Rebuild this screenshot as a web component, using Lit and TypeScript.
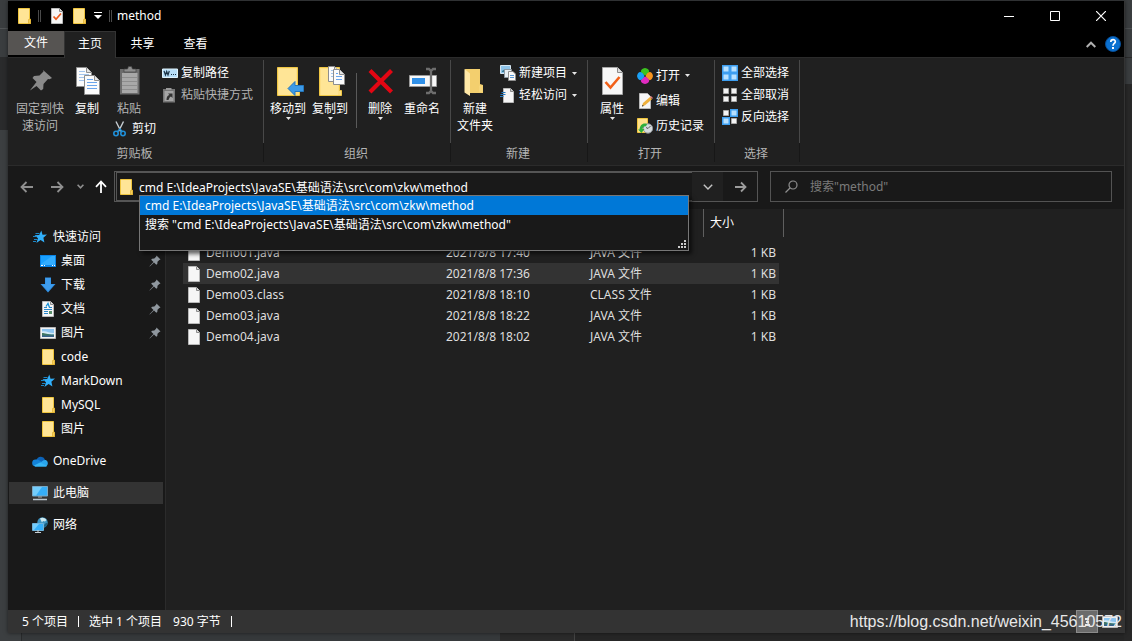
import { LitElement, html, css, svg, nothing, TemplateResult } from "lit";
import { customElement, state } from "lit/decorators.js";
import { classMap } from "lit/directives/class-map.js";

const draw = (w: number, h: number, body: unknown, vw = w, vh = h) =>
  html`<svg width=${w} height=${h} viewBox="0 0 ${vw} ${vh}" aria-hidden="true">${body}</svg>`;

const folder = (w = 16, h = 16) =>
  draw(w, h, svg`<path d="M2.5.5h11v11h1v4h-12z" fill="#ffe08a" stroke="#efc53e"/><path d="M3 1h10v14H3z" fill="#ffe596"/><path d="M12.5 15.5v-4l2-.5v4.5z" fill="#f5cf5b" stroke="#dfae2e" stroke-width=".7"/>`, 16, 16);

const page = (extra: unknown = nothing) =>
  draw(16, 16, svg`<path d="M2.5.5h8l3 3v12h-11z" fill="#f6f6f6" stroke="#b9b9b9"/><path d="M10.5.5v3h3" fill="#ddd" stroke="#8b8b8b"/>${extra}`);

const star = draw(16, 16, svg`<path d="M9.3 1.5l1.2 4.2 4.5-.1-3.6 3.1 1 4.8-3.8-2.4-4.2 3 1.6-4.9L2.500 6.300l4.700-.3z" fill="#31b0fb"/><path d="M3.500 4.500h4M1 7.500h4M2 10.500h3.500M1 12.500h3" stroke="#1b86c8"/>`);

const icons = {
  folder: folder(),
  star,
  desktop: draw(16, 16, svg`<path d="M0 2h16v12H0z" fill="#0a84e6"/><path d="M1 3h14v9H1z" fill="#19a0ff"/><path d="M1 11L12 3h3v9H1z" fill="#33adff"/><path d="M1 12.500h2m1 0h1m7 0h1m1 0h1" stroke="#fff"/>`),
  download: draw(16, 16, svg`<path d="M5 .5h6V7h4.500L8 15.500.5 7H5z" fill="#2f8fe3"/><path d="M5.500 1h5v6.500h3.500L8 14 2 7.500h3.500z" fill="#3f9ded"/>`),
  document: page(svg`<path d="M4 8.500h8M4 6.500h3M9 6.500h3M4 10.500h4M4 12.500h4" stroke="#2b87c9"/><path d="M6 5.500L8 2.500l1.500 4" stroke="#1791d6" stroke-width="1.300" fill="none"/><path d="M9 10h3v3H9z" fill="#5a8f6a"/>`),
  picture: draw(16, 16, svg`<path d="M.5 2.500h15v11H.5z" fill="#f2f2f2" stroke="#b8b8b8"/><path d="M2 4h12v8H2z" fill="#8cc4f0"/><path d="M2 6.500c4-1 8 2 12 1.500v1H2z" fill="#d3e9f5"/><path d="M2 8c3 0 5 1.500 12 1.500V12H2z" fill="#3f7663"/><path d="M2 10.500h12V12H2z" fill="#35608b"/>`),
  cloud: draw(16, 16, svg`<path d="M4.500 7A4.500 4.500 0 0 1 13 6.500L10 10z" fill="#0c63b8"/><path d="M3.500 13.500A3.300 3.300 0 0 1 3.800 6.500c2-.5 3.700.500 8.200 4z" fill="#1382d8"/><path d="M3 13.500L10.500 8c1-.8 2.500-1.500 4-.5 2 1.500 1.700 5-.5 6z" fill="#2aa5ec"/><path d="M2 12.500L8 9.500l7 3.200c-.5.800-1 .8-2 .8H4c-1 0-1.500-.4-2-1z" fill="#36b5f4"/>`),
  computer: draw(16, 16, svg`<path d="M.5 1.500h15v9.500H.5z" fill="#35aef8" stroke="#7aa8c4"/><path d="M1 2h9L4 10.500H1z" fill="#73cdfc"/><path d="M6 11.500h4v1H6zM4 13h8" fill="#aaa"/><path d="M1 14.500h14" stroke="#b9c6cf" stroke-width="1.500"/>`),
  network: draw(16, 16, svg`<circle cx="10.500" cy="5.500" r="5.200" fill="#3e93c0"/><path d="M8 1.500c2-1.300 5-.5 6.500 1.500l-1.500 1.500-2-.5-1 1.500z" fill="#cfe9ef"/><path d="M12 8c1.500-1.500 2.500-2.500 3.500-2 0 2-1 3.500-3 4.500z" fill="#1c5f80"/><path d="M.5 6.500h11v7H.5z" fill="#35aef8" stroke="#6fb3da"/><path d="M1 7h6l-5 6H1z" fill="#73cdfc"/><path d="M5 14h2M3 15.500h6" stroke="#c6cfd5"/>`),
  pin: draw(12, 12, svg`<path d="M7.500.5l4 4-1.200.4L8.500 6.700 8.300 9l-1 .8L5 7.500.8 11.500l-.3-.3L4.500 7 2.200 4.700l.8-1 2.300-.2 1.800-1.800z" fill="#8f979e"/>`),
  file: page(),
  check: page(svg`<path d="M4.500 8.500l2.500 2.700 5-5.700" stroke="#ea5a1c" stroke-width="1.700" fill="none"/>`),
};

const sheet = (x: number, y: number, w: number, h: number, line: string) => svg`
  <path d="M${x} ${y}h${w - 5}l5 5v${h - 5}h${-w}z" fill="#fbfbfb" stroke="#8e8e8e"/>
  <path d="M${x + w - 5} ${y}v5h5" fill="#e4e4e4" stroke="#8e8e8e"/>
  ${Array.from({ length: Math.floor((h - 5) / 3) }, (_, i) =>
    svg`<path d="M${x + 2.5} ${y + 4 + i * 3}h${i ? w - 5 : w - 9}" stroke=${line}/>`)}`;

const bigFolder = svg`<path d="M5.500 1.500h20v23h2v5h-22z" fill="#fddf86" stroke="#f0c744"/><path d="M7 3h17v26H7z" fill="#ffe596"/>`;

const big = {
  pin: draw(32, 32, svg`<path d="M19 4l9 8-2.500 1.300-1.500-.3-4.500 5-.3 5-2.200 1.500-4.500-4.500L6 24.500 7 23l5.500-7-4-4 1.500-2 5.500-.5 4-4z" fill="#8a8a8a"/>`),
  copy: draw(32, 32, svg`${sheet(5.5, 1.5, 15, 19, "#a3c4ec")}${sheet(13.5, 9.5, 15, 19, "#6aa5ec")}`),
  paste: draw(32, 32, svg`<path d="M7 3h19.500v25.500H7z" fill="#6c6c6c"/><path d="M9 7h15.500v20H9z" fill="#a8a8a8"/><path d="M9 11.500h15M9 15.500h15M9 19.500h15M9 23.500h15" stroke="#8d8d8d"/><path d="M11 6V3h3.500l1-2.500h3L19.500 3H23v3z" fill="#8e8e8e" stroke="#444" stroke-width=".7"/>`),
  move: draw(32, 32, svg`${bigFolder}<path d="M16 22.500l7-7v4h8.500v6H23v4z" fill="#3c9ae8" stroke="#2477bd"/>`),
  copyTo: draw(32, 32, svg`${bigFolder}${sheet(14.5, 0.5, 11, 15, "#a3c4ec")}${sheet(19.5, 3.5, 11, 15, "#6aa5ec")}`),
  del: draw(32, 32, svg`<path d="M6 4.500L27.500 26M27.500 4.500L6 26" stroke="#e30613" stroke-width="4.200"/>`),
  rename: draw(32, 32, svg`<path d="M3.500 9.500h27v11h-27z" fill="#f7f7f7" stroke="#9a9a9a"/><path d="M6 12h13v6H6z" fill="#3090e8"/><path d="M20 3h3l2 2 2-2h3M25 4v22M20 27h3l2-2 2 2h3" stroke="#6d6d6d" stroke-width="2.300" fill="none"/>`),
  newFolder: draw(32, 32, svg`<path d="M6 3h15v15l3 1v8H10z" fill="#f3cf6e"/><path d="M5.500 3L11 7.500V30l-5.500-3.500z" fill="#ffe8a6"/><path d="M20 19.500h3.500V26H20z" fill="#f7d67a"/>`),
  props: draw(32, 32, svg`<path d="M6.500 1.500h15l5 5v22h-20z" fill="#f7f7f7" stroke="#a6a6a6"/><path d="M21.500 1.500v5h5" fill="#ddd" stroke="#8b8b8b"/><path d="M9.500 16l5 5.500L23.500 11" stroke="#f26018" stroke-width="2.600" fill="none"/>`),
};

const tile = (x: number, y: number, on: boolean) =>
  on
    ? svg`<path d="M${x} ${y}h8v8h-8z" fill="#3d9ef0"/><path d="M${x + 1.5} ${y + 1.5}h5v5h-5z" fill="#b7e0ff"/>`
    : svg`<path d="M${x + 1.5} ${y + 1.5}h5v5h-5z" fill="#f4f4f4" stroke="#aaa"/>`;

const small = {
  path: draw(16, 16, svg`<path d="M.5 4h15v8.500H.5z" fill="#b5dcf6" stroke="#dff2fc"/><path d="M2 6l1.500 4 1.200-3.500L6 10l1.300-4" stroke="#1b3347" stroke-width="1.200" fill="none"/><path d="M9 9.500h1M11 9.500h1M13 9.500h1" stroke="#1b3347"/>`),
  pasteLink: draw(16, 16, svg`<path d="M1 2h12v13.500H1z" fill="#777"/><path d="M2.500 4h9v10h-9z" fill="#a5a5a5"/><path d="M4 1h5.500v2H4z" fill="#999"/><path d="M4.500 13c0-3 1-4.500 3-5L6 6.500h4.500V11L9 9.500C7.500 10 7 11.500 6.500 13z" fill="#333"/>`),
  cut: draw(16, 16, svg`<path d="M3 .5l5 10M10.500.5l-5 10" stroke="#c6cdd2" stroke-width="1.400"/><circle cx="3" cy="12.500" r="2.200" fill="none" stroke="#1f8fd8" stroke-width="1.600"/><circle cx="10" cy="12.500" r="2.200" fill="none" stroke="#1f8fd8" stroke-width="1.600"/><path d="M4 11l3-3 2.500 3" stroke="#1f8fd8" stroke-width="1.500" fill="none"/>`),
  newItem: draw(16, 16, svg`<path d="M.5 .5h10v8H.5z" fill="#8ec3e8" stroke="#d6e6f0"/><path d="M2 6l3-2 4 3H2z" fill="#3a7b94"/><path d="M4.500 4.500h7v8h-7z" fill="#e8eef3" stroke="#8e9aa3"/><path d="M8.500 6.500h4.500l2.500 2.500v6.500h-7z" fill="#f8f8f8" stroke="#8e8e8e"/><path d="M10 10.500h4M10 12.500h4" stroke="#5a9ad8"/>`),
  easy: draw(16, 16, svg`<path d="M3.500 1.500h7l3 3v11h-10z" fill="#f6f6f6" stroke="#b9b9b9"/><path d="M10.500 1.500v3h3" fill="#ccc" stroke="#888"/><path d="M1.500 5.500h4M.5 7.500h5M0 9.500h3.500" stroke="#2779bd"/>`),
  open: draw(16, 16, svg`<path d="M8 7.500C2.500 5 2.500 1 8 0c5.500 1 5.500 5 0 7.500z" fill="#3cc21f"/><path d="M8.500 8C11 2.500 15 2.500 16 8c-1 5.500-5 5.500-7.500 0z" fill="#f7941e"/><path d="M8 8.500c5.500 2.500 5.500 6.500 0 7.500-5.500-1-5.500-5 0-7.500z" fill="#e02bc0"/><path d="M7.500 8C5 13.500 1 13.500 0 8 1 2.500 5 2.500 7.500 8z" fill="#1ba0f5"/>`),
  edit: draw(16, 16, svg`<path d="M2.500.5h8l3 3v12h-11z" fill="#f6f6f6" stroke="#b9b9b9"/><path d="M5 13.500l1-3.500 7-6 2 2.200-7 6z" fill="#f0b13c"/><path d="M13 4l1-1 2 2-1 1z" fill="#e07a7a"/><path d="M5 13.500l.5-1.700 1.300 1.200z" fill="#333"/>`),
  history: draw(16, 16, svg`<path d="M.5.5h10v11h1v3H.5z" fill="#ffe08a" stroke="#efc53e"/><circle cx="11" cy="10.500" r="4.700" fill="#d6dbde" stroke="#8c9296"/><path d="M11 10.500l2.500-2.500M11 10.500l-2-1" stroke="#555"/><path d="M2.500 11.500C3 7 6 4.500 10 6L9 8.500C7 8 6 9 5.500 11h2L4.500 15 1 11.500z" fill="#2fae3b"/>`),
  all: draw(16, 16, svg`${tile(0, 0, true)}${tile(8, 0, true)}${tile(0, 8, true)}${tile(8, 8, true)}`),
  none: draw(16, 16, svg`${tile(0, 0, false)}${tile(8, 0, false)}${tile(0, 8, false)}${tile(8, 8, false)}`),
  invert: draw(16, 16, svg`${tile(0, 0, false)}${tile(8, 0, true)}${tile(0, 8, true)}${tile(8, 8, false)}`),
};

const caret = draw(5, 3, svg`<path d="M0 0h5L2.500 3z" fill="#e6e6e6"/>`);

interface NavItem { icon: keyof typeof icons; label: string; pinned?: boolean; }

@customElement("explorer-ribbon")
export class ExplorerRibbon extends LitElement {
  static styles = css`
    :host { display: flex; height: 107px; background: #202020; border-top: 1px solid #2b2b2b; border-bottom: 1px solid #2b2b2b; box-sizing: content-box; }
    .group { display: flex; flex-direction: column; flex: none; padding-right: 1px; box-sizing: border-box;
      background: linear-gradient(#484848 0 83px, #171717 83px) right 2px / 1px 102px no-repeat; }
    .g1 { width: 256px; } .g2 { width: 187px; } .g3 { width: 137px; } .g4 { width: 127px; } .g5 { width: 85px; }
    .items { display: flex; height: 88px; padding-left: 3px; }
    .g1 .items { padding-left: 8px; }
    .g5 .items { padding-left: 7px; }
    .caption { text-align: center; line-height: 16px; color: #b4b4b4; padding-right: 2px; }
    button { background: none; border: 0; margin: 0; padding: 0; font: inherit; color: #fff; white-space: nowrap; }
    svg { display: block; flex: none; }
    .big { display: flex; flex-direction: column; align-items: center; width: 42px; padding-top: 8px; line-height: 17px; align-self: flex-start; }
    .big > svg:first-child { margin-bottom: 2px; }
    .wide { width: 48px; margin-right: 2px; }
    .dim { color: #b4b4b4; }
    .paste { width: 54px; }
    .stack { display: flex; flex-direction: column; padding-top: 4px; }
    .loose { padding-top: 5px; }
    .g3 .stack, .g4 .stack { margin-left: 4px; }
    .row { display: flex; align-items: center; gap: 3px; height: 22px; }
    .row svg:last-child:not(:first-child) { margin-left: 2px; }
    .loose .row { height: 25px; }
    .cut { margin: 1px 0 0 5px; }
    .rule { width: 1px; height: 55px; margin: 15px 2px 0 5px; background: #5a5a5a; }
  `;
  private big(icon: TemplateResult, label: unknown, cls = "", arrow = false) {
    return html`<button class="big ${cls}">${icon}<span>${label}</span>${arrow ? caret : nothing}</button>`;
  }
  private row(icon: TemplateResult, label: string, cls = "", arrow = false) {
    return html`<button class="row ${cls}">${icon}<span>${label}</span>${arrow ? caret : nothing}</button>`;
  }
  render() {
    return html`
      <div class="group g1">
        <div class="items">
          ${this.big(big.pin, html`固定到快<br />速访问`, "wide dim")}
          ${this.big(big.copy, "复制")}
          <div class="paste">${this.big(big.paste, "粘贴", "dim")}${this.row(small.cut, "剪切", "cut")}</div>
          <div class="stack">${this.row(small.path, "复制路径")}${this.row(small.pasteLink, "粘贴快捷方式", "dim")}</div>
        </div>
        <div class="caption">剪贴板</div>
      </div>
      <div class="group g2">
        <div class="items">
          ${this.big(big.move, "移动到", "", true)}${this.big(big.copyTo, "复制到", "", true)}
          <div class="rule"></div>
          ${this.big(big.del, "删除", "", true)}${this.big(big.rename, "重命名")}
        </div>
        <div class="caption">组织</div>
      </div>
      <div class="group g3">
        <div class="items">
          ${this.big(big.newFolder, html`新建<br />文件夹`)}
          <div class="stack">${this.row(small.newItem, "新建项目", "", true)}${this.row(small.easy, "轻松访问", "", true)}</div>
        </div>
        <div class="caption">新建</div>
      </div>
      <div class="group g4">
        <div class="items">
          ${this.big(big.props, "属性", "", true)}
          <div class="stack loose">${this.row(small.open, "打开", "", true)}${this.row(small.edit, "编辑")}${this.row(small.history, "历史记录")}</div>
        </div>
        <div class="caption">打开</div>
      </div>
      <div class="group g5">
        <div class="items">
          <div class="stack">${this.row(small.all, "全部选择")}${this.row(small.none, "全部取消")}${this.row(small.invert, "反向选择")}</div>
        </div>
        <div class="caption">选择</div>
      </div>`;
  }
}

@customElement("explorer-sidebar")
export class ExplorerSidebar extends LitElement {
  static styles = css`
    :host { display: block; background: #191919; padding: 16px 2px 0 1px; border-right: 1px solid #2b2b2b; }
    ul { list-style: none; margin: 0 0 8px; padding: 0; }
    li { padding: 1px 0; }
    a { display: flex; align-items: center; height: 22px; padding: 0 2px 0 23px; color: #fff; text-decoration: none; gap: 5px; }
    .child { padding-left: 31px; }
    .current { background: #333; }
    .name { flex: 1; white-space: nowrap; }
    svg { display: block; flex: none; }
  `;
  private groups: NavItem[][] = [
    [
      { icon: "star", label: "快速访问" },
      { icon: "desktop", label: "桌面", pinned: true },
      { icon: "download", label: "下载", pinned: true },
      { icon: "document", label: "文档", pinned: true },
      { icon: "picture", label: "图片", pinned: true },
      { icon: "folder", label: "code" },
      { icon: "star", label: "MarkDown" },
      { icon: "folder", label: "MySQL" },
      { icon: "folder", label: "图片" },
    ],
    [{ icon: "cloud", label: "OneDrive" }],
    [{ icon: "computer", label: "此电脑" }],
    [{ icon: "network", label: "网络" }],
  ];
  render() {
    return html`<nav>${this.groups.map((g) => html`<ul>${g.map((item, i) => html`
      <li><a href="#" class=${classMap({ child: i > 0, current: item.icon === "computer" })}>
        ${icons[item.icon]}<span class="name">${item.label}</span>${item.pinned ? icons.pin : nothing}</a></li>`)}</ul>`)}</nav>`;
  }
}

@customElement("app-root")
export class AppRoot extends LitElement {
  static styles = css`
    :host {
      display: block; position: relative; box-sizing: border-box; height: 100vh; padding: 1px 8px 8px; overflow: hidden;
      font: 12px/18px "Noto Sans", "Noto Sans CJK SC", sans-serif; color: #fff;
      background:
        linear-gradient(#3a3d3f 0 28px, #4b4e50 28px 29px, #3a3d3f 29px 57px, #2a2a2a 57px 58px, #3a3d3f 58px 84px, #282828 84px) right top / 8px 100% no-repeat,
        linear-gradient(#3a3d3f 0 28px, #505355 28px 29px, #3a3d3f 29px 57px, #2a2b2c 57px 130px, #3c3f41 130px) left top / 8px 100% no-repeat,
        linear-gradient(90deg, #3c3f41 0 21px, #292b2c 21px 22px, #36393b 22px 500px, #2b2b2b 500px 574px, #444 574px 575px, #262626 575px) left bottom / 100% 8px no-repeat,
        #3c3f41;
    }
    svg { display: block; flex: none; }
    button { background: none; border: 0; margin: 0; padding: 0; font: inherit; color: inherit; display: flex; align-items: center; justify-content: center; }
    .window { display: flex; flex-direction: column; height: 100%; background: #191919; box-shadow: 0 0 4px #0008; box-sizing: border-box; border-right: 1px solid #333; margin-right: -1px; }
    .title { display: flex; align-items: center; height: 30px; background: #000; }
    .quick { display: flex; align-items: center; padding-left: 8px; flex: 1; }
    .bar { width: 1px; height: 12px; border: solid #4a4a4a; border-width: 0 1px; }
    .quick .bar { margin: 0 8px 0 6px; }
    .quick button + button { margin-left: 6px; }
    .quick .more { margin-left: 3px; width: 16px; }
    .quick .last { margin: 0 5px 0 3px; }
    h1 { margin: 0; font: inherit; }
    .control { width: 46px; height: 30px; }
    .tabs { display: flex; height: 26px; background: #000; }
    .tab { width: 53px; height: 25px; }
    .file { width: 56px; height: 24px; background: #565452; }
    .home { width: 52px; height: 27px; padding-bottom: 2px; box-sizing: border-box; background: #202020; border: solid #333; border-width: 1px 1px 0; z-index: 1; }
    .fold { margin-left: auto; width: 20px; margin-right: 2px; }
    .help { width: 20px; margin-right: 1px; }
    .nav { display: flex; align-items: flex-start; padding: 5px 12px 7px 4px; height: 31px; }
    .nav > button { height: 31px; width: 30px; }
    .nav > .history { width: 16px; }
    .nav > .up { width: 26px; }
    .address { flex: 642; min-width: 0; display: flex; box-sizing: border-box; height: 31px; border: 1px solid #555; position: relative; }
    .edit { flex: 1; display: flex; align-items: center; gap: 5px; margin-left: 1px; padding-left: 1px; border: solid #555; border-width: 1px 0 1px 1px; min-width: 0; }
    input { flex: 1; min-width: 0; background: none; border: 0; padding: 0; margin: 0; font: inherit; color: #fff; outline: 0; height: 20px; }
    .drop { width: 31px; background: #202020; }
    .go { width: 34px; }
    .popup { position: absolute; left: 24px; right: 68px; top: 23px; height: 56px; box-sizing: border-box; background: #191919; border: 1px solid #767676; box-shadow: 3px 3px 4px #0009; z-index: 2; }
    .popup ul { margin: 0; padding: 0; list-style: none; }
    .popup li { line-height: 19px; height: 19px; padding-left: 5px; white-space: nowrap; overflow: hidden; }
    .popup .active { background: #0078d7; }
    .grip { position: absolute; right: 2px; bottom: 2px; }
    .search { flex: 326; min-width: 0; display: flex; align-items: center; gap: 12px; margin-left: 12px; padding-left: 14px; height: 31px; box-sizing: border-box; border: 1px solid #535353; }
    .search input::placeholder { color: #7b7b7b; opacity: 1; }
    .body { flex: 1; min-height: 0; display: grid; grid-template-columns: 158px 1fr; }
    .files { background: #202020; padding-left: 17px; overflow: hidden; }
    table { border-collapse: separate; border-spacing: 0; table-layout: fixed; width: 601px; }
    th { height: 28px; padding: 0 0 0 6px; font-weight: normal; text-align: left; box-sizing: border-box; border-right: 1px solid #5f5f5f; }
    .c1 { width: 253px; } .c2 { width: 144px; } .c3 { width: 124px; }
    tbody::before { content: ""; display: block; height: 5px; }
    td { height: 21px; padding: 0; color: #dedede; white-space: nowrap; }
    td:nth-child(2), td:nth-child(3) { padding-left: 10px; }
    td:last-child { text-align: right; padding-right: 3px; border-right: 5px solid transparent; background-clip: padding-box; }
    .selected td { background-color: #333; }
    .name { display: flex; align-items: center; gap: 4px; padding-left: 3px; }
    .status { display: flex; align-items: center; height: 23px; background: #333; padding-left: 14px; }
    .status .sep { width: 1px; height: 11px; background: #fff; margin: 0 10px; }
    .status .bytes { margin-left: 11px; }
    .views { margin-left: auto; display: flex; height: 23px; margin-right: 3px; }
    .views button { width: 22px; }
    .views .on { background: #6b6b6b; border: 1px solid #8b8b8b; box-sizing: border-box; margin-right: 1px; }
    .mark { position: absolute; right: 10px; bottom: 9px; font: 16px/20px "Liberation Sans", sans-serif; color: #e8e8e8; }
  `;

  @state() private query = "cmd E:\\IdeaProjects\\JavaSE\\基础语法\\src\\com\\zkw\\method";

  private files = [
    ["Demo01.java", "2021/8/8 17:40", "JAVA 文件"],
    ["Demo02.java", "2021/8/8 17:36", "JAVA 文件"],
    ["Demo03.class", "2021/8/8 18:10", "CLASS 文件"],
    ["Demo03.java", "2021/8/8 18:22", "JAVA 文件"],
    ["Demo04.java", "2021/8/8 18:02", "JAVA 文件"],
  ];

  render() {
    const arrow = (d: string, color: string, w = 14) =>
      draw(w, 14, svg`<path d=${d} fill="none" stroke=${color} stroke-width="1.800"/>`);
    return html`
      <div class="window">
        <header class="title">
          <div class="quick">
            ${folder()}<span class="bar"></span>
            <button aria-label="属性">${icons.check}</button>
            <button aria-label="新建文件夹">${folder()}</button>
            <button class="more" aria-label="自定义">${draw(8, 8, svg`<path d="M0 .5h8" stroke="#fff"/><path d="M0 3h8L4 7z" fill="#fff"/>`)}</button>
            <span class="bar last"></span>
            <h1>method</h1>
          </div>
          <button class="control" aria-label="最小化">${draw(10, 10, svg`<path d="M0 5.500h10" stroke="#fff"/>`)}</button>
          <button class="control" aria-label="最大化">${draw(10, 10, svg`<path d="M.5.5h9v9h-9z" fill="none" stroke="#fff"/>`)}</button>
          <button class="control" aria-label="关闭">${draw(10, 10, svg`<path d="M0 0l10 10M10 0L0 10" stroke="#fff" stroke-width="1.200"/>`)}</button>
        </header>
        <div class="tabs">
          <button class="tab file">文件</button>
          <button class="tab home">主页</button>
          <button class="tab">共享</button>
          <button class="tab">查看</button>
          <button class="fold" aria-label="折叠">${draw(10, 7, svg`<path d="M.7 6L5 1.700 9.300 6" fill="none" stroke="#b0b0b0" stroke-width="2"/>`)}</button>
          <button class="help" aria-label="帮助">${draw(16, 16, svg`<circle cx="8" cy="8" r="7.500" fill="#0a70d0" stroke="#084e96"/><path d="M5.800 6c0-3 4.500-3 4.500-.3C10.300 7.500 8 7.500 8 9.700" fill="none" stroke="#fff" stroke-width="1.700"/><path d="M7 11h2v2H7z" fill="#fff"/>`)}</button>
        </div>
        <explorer-ribbon></explorer-ribbon>
        <div class="nav">
          <button aria-label="后退">${arrow("M13 7H2M6.500 2L1.500 7l5 5", "#8f8f8f")}</button>
          <button aria-label="前进">${arrow("M1 7h11M7.500 2l5 5-5 5", "#8f8f8f")}</button>
          <button class="history" aria-label="最近">${draw(7, 5, svg`<path d="M.6.8l2.900 3 2.900-3" fill="none" stroke="#8f8f8f" stroke-width="1.600"/>`)}</button>
          <button class="up" aria-label="向上">${arrow("M7 13V2M2 6.800L7 1.500l5 5.300", "#fff")}</button>
          <div class="address">
            <div class="edit">
              ${folder()}
              <input aria-label="地址" .value=${this.query} @input=${(e: Event) => (this.query = (e.target as HTMLInputElement).value)} />
            </div>
            <button class="drop" aria-label="历史">${draw(10, 6, svg`<path d="M.8.7L5 5 9.200.7" fill="none" stroke="#c4c4c4" stroke-width="1.400"/>`)}</button>
            <button class="go" aria-label="转到">${arrow("M1 7h10M7 2.500L11.500 7 7 11.500", "#9c9c9c", 13)}</button>
            <div class="popup">
              <ul>
                <li class="active">${this.query}</li>
                <li>搜索 "${this.query}"</li>
              </ul>
              <span class="grip">${draw(8, 8, svg`<path d="M6 0h2v2H6zM3 3h2v2H3zM6 3h2v2H6zM0 6h2v2H0zM3 6h2v2H3zM6 6h2v2H6z" fill="#ccc"/>`)}</span>
            </div>
          </div>
          <div class="search">
            ${draw(13, 13, svg`<circle cx="8" cy="5" r="4" fill="none" stroke="#8f8f8f" stroke-width="1.200"/><path d="M5 8L.5 12.500" stroke="#8f8f8f" stroke-width="1.300"/>`)}
            <input aria-label="搜索" placeholder='搜索"method"' />
          </div>
        </div>
        <div class="body">
          <explorer-sidebar></explorer-sidebar>
          <main class="files">
            <table>
              <thead><tr><th class="c1"></th><th class="c2"></th><th class="c3"></th><th>大小</th></tr></thead>
              <tbody>
                ${this.files.map(([name, date, type], i) => html`
                  <tr class=${classMap({ selected: i === 1 })}>
                    <td><div class="name">${icons.file}<span>${name}</span></div></td>
                    <td>${date}</td><td>${type}</td><td>1 KB</td>
                  </tr>`)}
              </tbody>
            </table>
          </main>
        </div>
        <footer class="status">
          <span>5 个项目</span><span class="sep"></span><span>选中 1 个项目</span><span class="bytes">930 字节</span><span class="sep"></span>
          <div class="views">
            <button class="on" aria-label="详细信息">${draw(12, 12, svg`<path d="M4 2h4v2H4zM5 5h3v2H5zM4 8h5v2H4z" fill="#e8e8e8"/>`)}</button>
            <button aria-label="大图标">${icons.picture}</button>
          </div>
        </footer>
      </div>
      <div class="mark">https://blog.csdn.net/weixin_45610572</div>`;
  }
}
